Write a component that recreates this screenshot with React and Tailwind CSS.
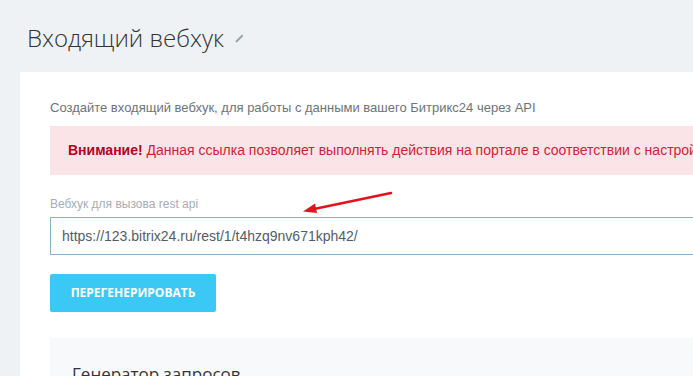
import React from 'react';

const PencilIcon = () => (
  <svg width="11" height="11" viewBox="0 0 11 11" className="ml-[10px] mt-[12px]">
    <path d="M1.5 9.5 L2 7.6 L8 1.6 L9.4 3 L3.4 9 Z" fill="#9ca3a8" />
  </svg>
);

const Arrow = () => (
  <svg
    width="100"
    height="30"
    viewBox="0 0 100 30"
    className="absolute left-[300px] top-[188px] pointer-events-none"
  >
    <line x1="91" y1="5" x2="14" y2="21" stroke="#e3121c" strokeWidth="2.6" strokeLinecap="round" />
    <path d="M3 23.5 L15 15.5 L17 25 Z" fill="#e3121c" />
  </svg>
);

export default function App() {
  return (
    <div className="relative w-[693px] h-[376px] overflow-hidden bg-[#eef2f4] font-['Liberation_Sans',Arial,sans-serif]">
      {/* page title */}
      <div className="h-[72px] pl-[27px] pt-[21px] flex items-start">
        <h1 className="text-[24px] leading-[34px] font-light text-[#333] font-['Open_Sans',sans-serif]">
          Входящий вебхук
        </h1>
        <PencilIcon />
      </div>

      {/* card */}
      <div className="ml-[20px] w-[900px] bg-white pl-[30px] pt-[28px] pb-[20px]">
        <p className="text-[13px] leading-[16px] text-[#6e7378]">
          Создайте входящий вебхук, для работы с данными вашего Битрикс24 через API
        </p>

        <div className="mt-[10px] h-[49px] bg-[#fbe4e7] flex items-center pl-[18px] whitespace-nowrap">
          <span className="text-[14px] text-[#d1213a]">
            <b className="text-[#b3001e]">Внимание!</b> Данная ссылка позволяет выполнять действия на портале в соответствии с настройками прав вебхука
          </span>
        </div>

        <div className="mt-[22px] text-[12px] leading-[14px] text-[#a8adb2]">
          Вебхук для вызова rest api
        </div>

        <div className="mt-[6px] h-[38px] border border-[#8bb2c9] flex items-center pl-[11px]">
          <span className="text-[14px] text-[#535c69]">
            https://123.bitrix24.ru/rest/1/t4hzq9nv671kph42/
          </span>
        </div>

        <button className="mt-[19px] w-[166px] h-[38px] rounded-[2px] bg-[#3bc8f5] text-white text-[12px] font-bold uppercase font-['Open_Sans',sans-serif]">
          Перегенерировать
        </button>

        <div className="mt-[26px] bg-[#f8f9fa] pl-[22px] pt-[24px] h-[120px]">
          <div className="text-[17px] leading-[24px] font-['Open_Sans',sans-serif] text-[#333]">
            Генератор запросов
          </div>
        </div>
      </div>

      <Arrow />
    </div>
  );
}
